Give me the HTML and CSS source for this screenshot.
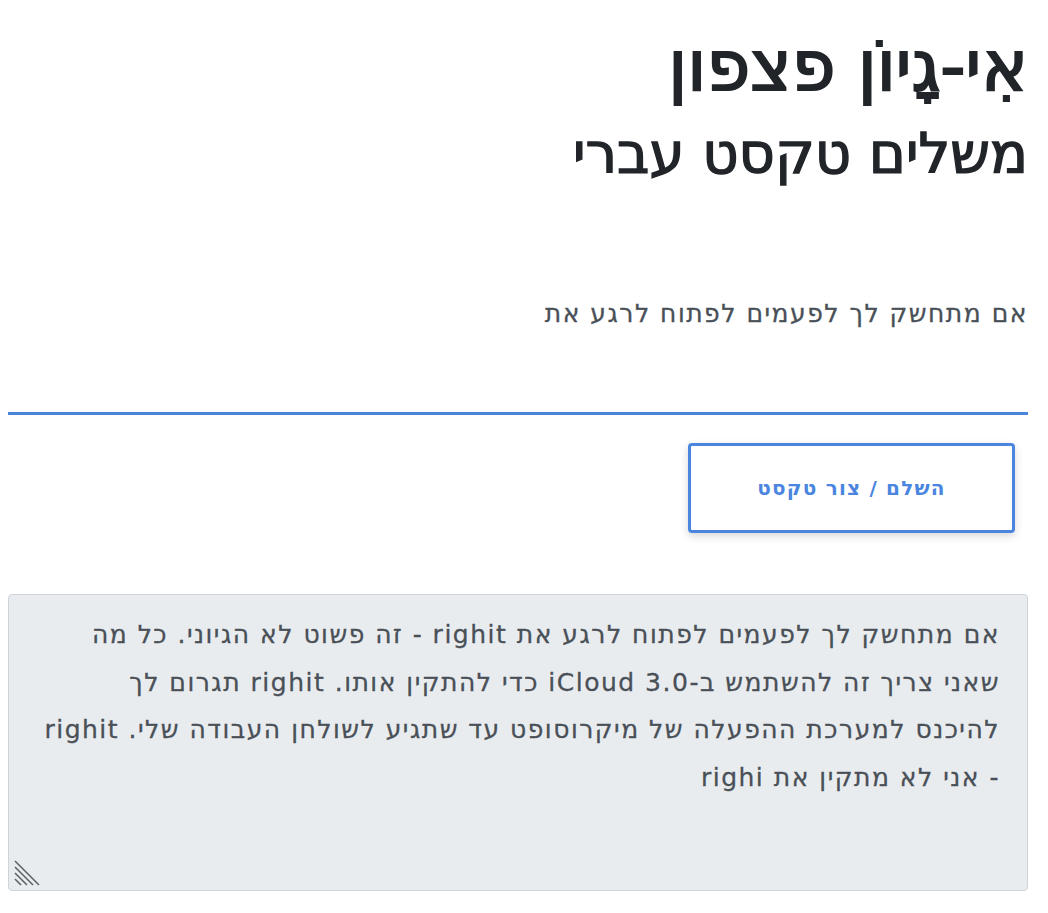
FILE: index.html
```html
<!DOCTYPE html>
<html lang="he" dir="rtl">
<head>
<meta charset="utf-8">
<title>אִי-גָיוֹן פצפון</title>
<link rel="stylesheet" href="styles.css">
</head>
<body>
<main class="page">
  <header class="head">
    <h1 class="title">אִי-גָיוֹן פצפון</h1>
    <h2 class="subtitle">משלים טקסט עברי</h2>
  </header>
  <section class="form">
    <input class="prompt" type="text" value="אם מתחשק לך לפעמים לפתוח לרגע את">
    <div class="actions">
      <button class="btn" type="button">השלם / צור טקסט</button>
    </div>
    <div class="output-wrap">
      <textarea class="output" dir="rtl">אם מתחשק לך לפעמים לפתוח לרגע את righit - זה פשוט לא הגיוני. כל מה
שאני צריך זה להשתמש ב-iCloud 3.0 כדי להתקין אותו. righit תגרום לך
להיכנס למערכת ההפעלה של מיקרוסופט עד שתגיע לשולחן העבודה שלי. righit
- אני לא מתקין את righi</textarea>
      <svg class="grip" width="26" height="26" viewBox="0 0 26 26" aria-hidden="true">
        <path d="M1 1 L25 25 M1 7 L19 25 M1 13 L13 25 M1 19 L7 25" stroke="#5f6368" stroke-width="1.6" fill="none"/>
      </svg>
    </div>
  </section>
</main>
</body>
</html>
```

FILE: styles.css
```css
html, body {
  margin: 0;
  padding: 0;
  background: #ffffff;
}

.page {
  direction: rtl;
  padding: 0 20px 0 8px;
  font-family: "DejaVu Sans", sans-serif;
  color: #212529;
}

.head {
  display: flex;
  flex-direction: column;
}

.title {
  margin: 24px 0 0;
  font-size: 70px;
  font-weight: 400;
  line-height: 1.2;
  -webkit-text-stroke: 2px #212529;
}

.subtitle {
  margin: 12px 0 0;
  font-size: 56px;
  font-weight: 400;
  line-height: 1.2;
  -webkit-text-stroke: 1.4px #212529;
}

.form {
  display: flex;
  flex-direction: column;
}

.prompt {
  display: block;
  margin-top: 113px;
  width: 100%;
  box-sizing: border-box;
  padding: 0 0 84px;
  border: none;
  border-bottom: 3px solid #4a86d8;
  outline: none;
  background: transparent;
  font-family: "DejaVu Sans", sans-serif;
  font-size: 25px;
  letter-spacing: 1.5px;
  line-height: 28px;
  color: #495057;
  -webkit-text-stroke: 0.3px #495057;
  direction: rtl;
}

.actions {
  display: flex;
  justify-content: flex-start;
  margin-top: 28px;
  padding-right: 13px;
}

.btn {
  width: 327px;
  height: 90px;
  background: #ffffff;
  border: 3px solid #4a86e0;
  border-radius: 4px;
  box-shadow: 0 3px 9px rgba(0, 0, 0, 0.16);
  color: #4a86e0;
  font-family: "DejaVu Sans", sans-serif;
  font-size: 20px;
  letter-spacing: 1.2px;
  font-weight: 700;
  cursor: pointer;
}

.output-wrap {
  position: relative;
  margin-top: 61px;
}

.output {
  display: block;
  width: 100%;
  height: 297px;
  box-sizing: border-box;
  padding: 16px 27px 0 8px;
  background: #e9ecef;
  border: 1px solid #ced4da;
  border-radius: 4px;
  font-family: "DejaVu Sans", sans-serif;
  font-size: 25px;
  letter-spacing: 1.5px;
  line-height: 47.5px;
  color: #495057;
  -webkit-text-stroke: 0.3px #495057;
  outline: none;
  resize: none;
  white-space: pre-wrap;
}

.grip {
  position: absolute;
  left: 6px;
  bottom: 5px;
  pointer-events: none;
}
```
